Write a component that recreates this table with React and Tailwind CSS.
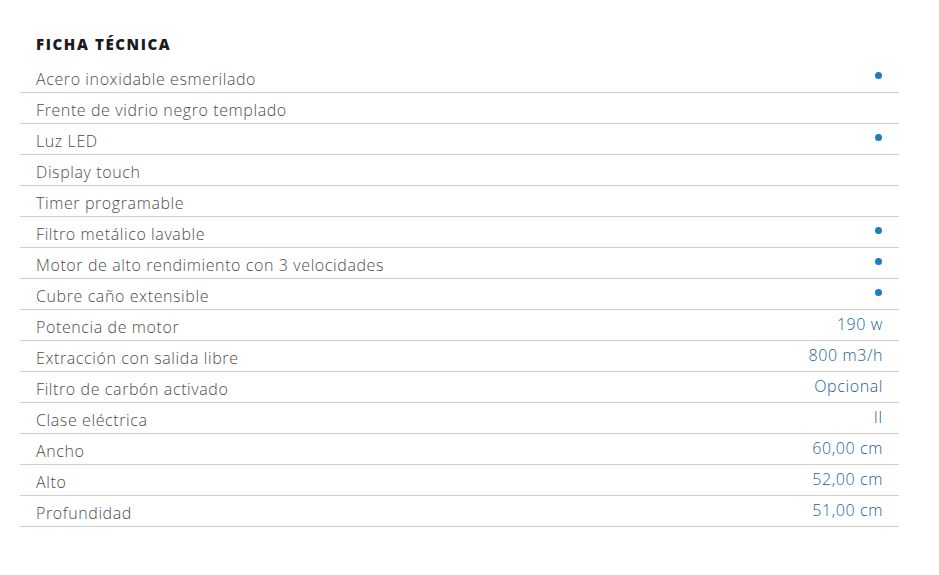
import React from 'react';

const rows = [
  { label: 'Acero inoxidable esmerilado', dot: true },
  { label: 'Frente de vidrio negro templado' },
  { label: 'Luz LED', dot: true },
  { label: 'Display touch' },
  { label: 'Timer programable' },
  { label: 'Filtro metálico lavable', dot: true },
  { label: 'Motor de alto rendimiento con 3 velocidades', dot: true },
  { label: 'Cubre caño extensible', dot: true },
  { label: 'Potencia de motor', value: '190 w' },
  { label: 'Extracción con salida libre', value: '800 m3/h' },
  { label: 'Filtro de carbón activado', value: 'Opcional' },
  { label: 'Clase eléctrica', value: 'II' },
  { label: 'Ancho', value: '60,00 cm' },
  { label: 'Alto', value: '52,00 cm' },
  { label: 'Profundidad', value: '51,00 cm' },
];

const App = () => {
  return (
    <div className="min-h-screen bg-white pt-[34px]" style={{ fontFamily: "'Open Sans', 'Liberation Sans', sans-serif" }}>
      <div className="ml-5 w-[879px]">
        <h2 className="pl-4 text-[15px] font-black leading-5 text-[#1b1b1b] tracking-[1.6px]">FICHA TÉCNICA</h2>
        <div className="mt-[8px]">
          {rows.map((row) => (
            <div key={row.label} className="flex h-[31px] items-center justify-between border-b border-[#cfcfcf] pl-4 pr-4">
              <span className="pt-[4px] text-[16px] font-light tracking-[0.6px] text-[#4d4d4d]">{row.label}</span>
              {row.dot && <span className="mb-[4px] mr-[1px] h-[7px] w-[7px] rounded-full bg-[#1c7cc4]"></span>}
              {row.value && <span className="pb-[2px] text-[16px] font-light tracking-[0.6px] text-[#245f96]">{row.value}</span>}
            </div>
          ))}
        </div>
      </div>
    </div>
  );
};

export default App;
